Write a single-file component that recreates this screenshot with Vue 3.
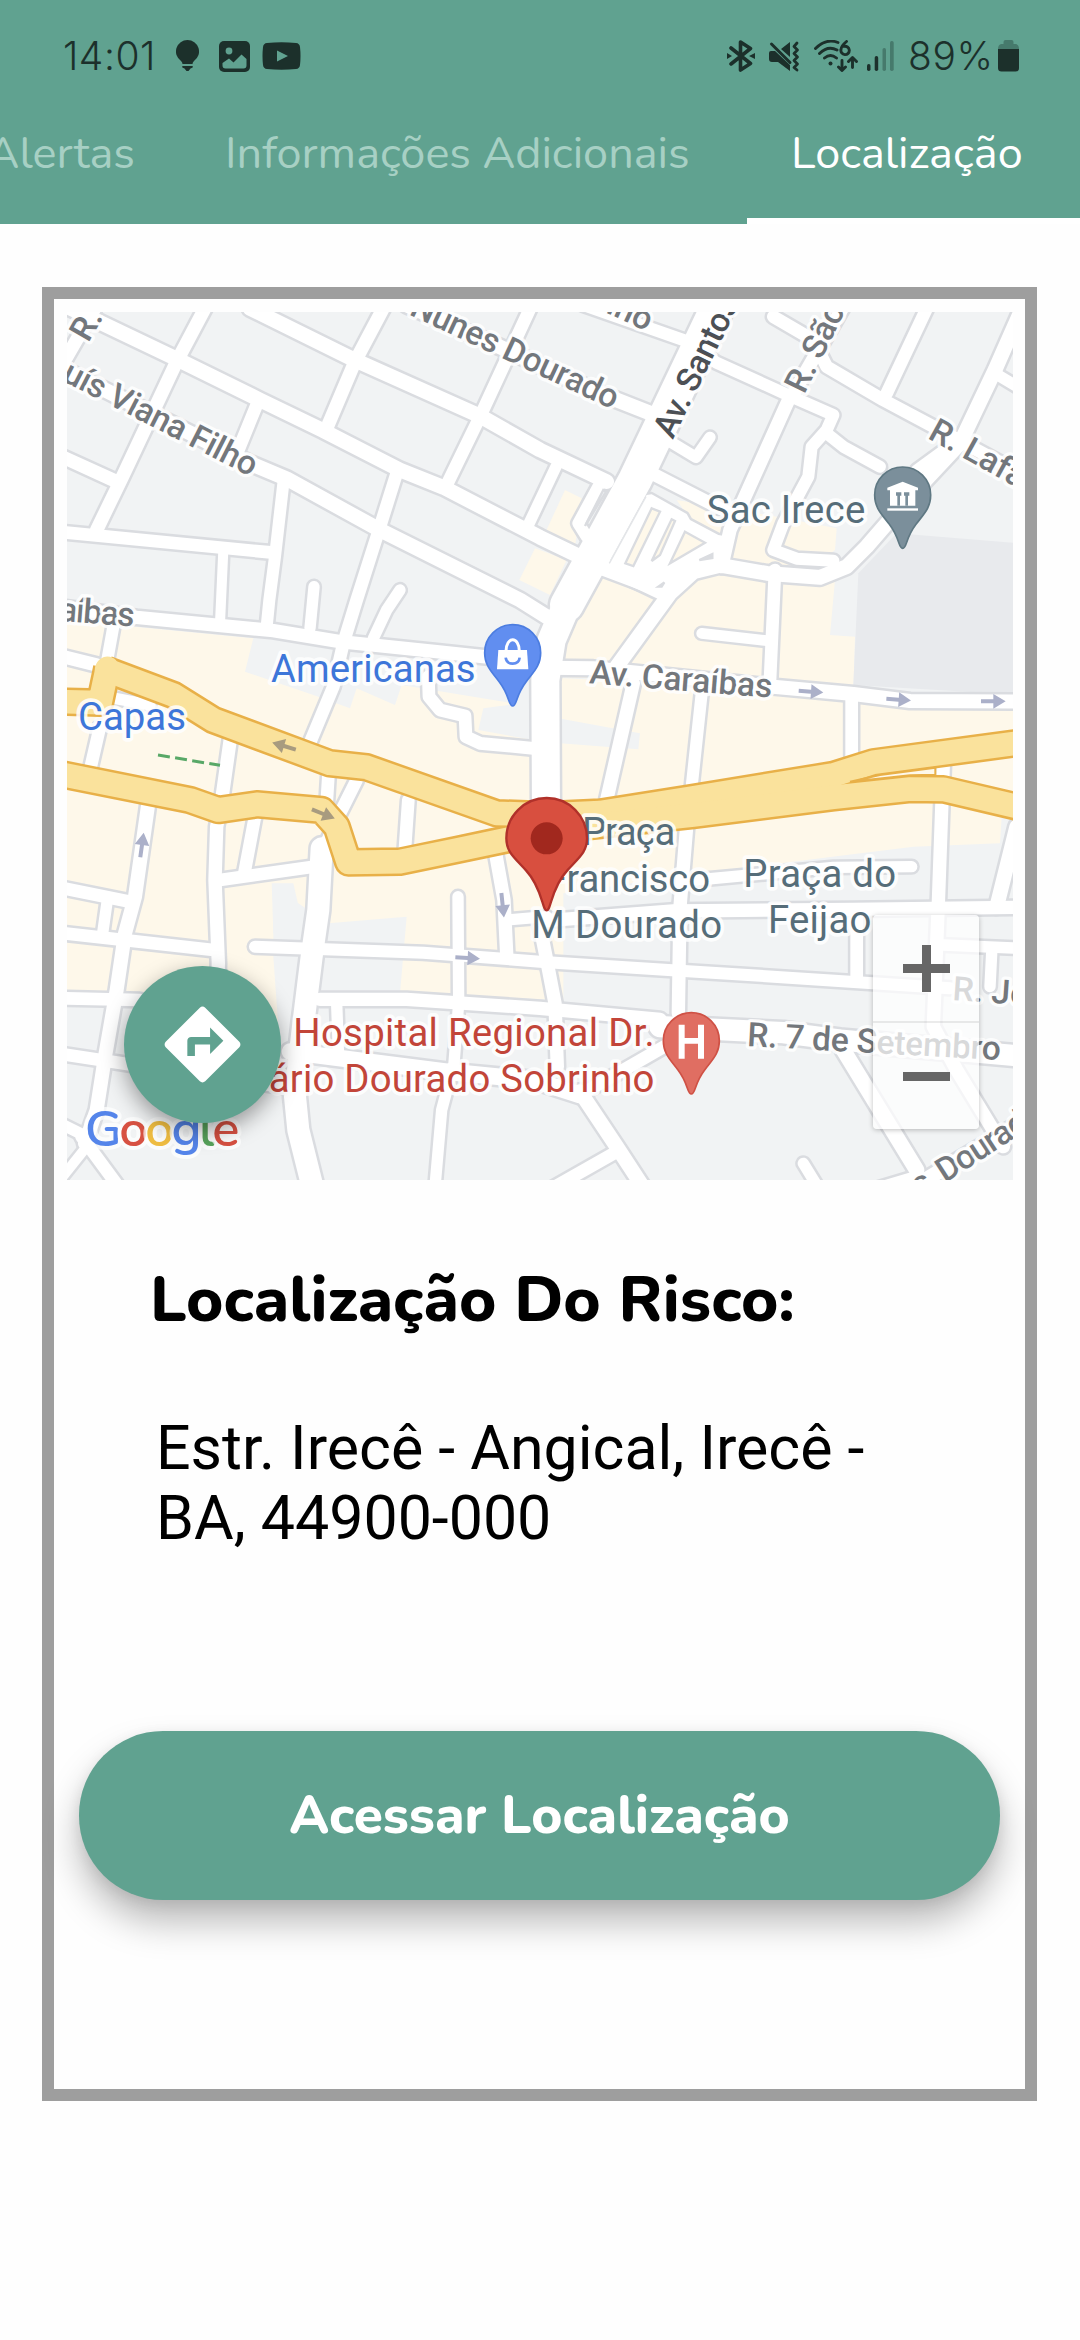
<script setup>
// Street geometry, in thirds of a CSS pixel: [points, inner width]
const streets = [
  ['190,915 300,967 520,1072 780,1200 970,1292 1200,1410 1330,1462 1620,1612 1740,1670', 44],
  ['750,925 1060,1078 1440,1248 1620,1350 1820,1445', 44],
  ['1220,915 1560,1068 1800,1180 1960,1243', 44],
  ['1750,915 2050,1020 2150,1088 2370,1188 2500,1245 2480,1290 2435,1340 2425,1430 2350,1570 2320,1650 2390,1676 2500,1682', 36],
  ['2480,1300 2530,1340 2640,1400', 36],
  ['195,1080 290,915', 40],
  ['620,915 530,1085 365,1435 290,1590', 40],
  ['770,1215 715,1350', 38],
  ['1155,915 1065,1085 980,1285', 40],
  ['1595,915 1440,1250 1340,1455', 38],
  ['1668,1400 1585,1575', 34],
  ['1190,1420 1140,1580 1070,1800 1030,1930 1000,2060 925,2240', 38],
  ['850,1450 825,1670 808,1800 800,1880', 36],
  ['150,1080 200,1112 750,1390 860,1436 1140,1590 1560,1800 1640,1850', 44],
  ['190,1372 350,1445', 40],
  ['190,1597 820,1658', 38],
  ['670,1650 660,1870', 30],
  ['942,1760 930,1885', 34],
  ['1200,1770 1160,1830 1120,1915', 34],
  ['190,1822 410,1852 820,1892 1020,1925 1310,1955 1640,1990', 40],
  ['1640,2003 1780,2005 2320,2060 2560,2082 2730,2103 3060,2105', 42],
  ['340,1880 320,1990', 36],
  ['190,1970 290,1995', 40],
  ['345,2095 450,2115', 34],
  ['300,2180 270,2310', 38],
  ['692,2210 665,2400 650,2480 645,2640 655,2890 652,2980', 40],
  ['765,2450 732,2625', 38],
  ['660,2640 940,2600', 38],
  ['445,2410 405,2690 375,2800 350,2970 315,3170 290,3330 255,3430', 42],
  ['985,2330 980,2410', 38],
  ['1070,2340 1015,2450 965,2560', 38],
  ['965,2545 955,2730 935,2870 910,3070 885,3290 895,3390 935,3550', 66],
  ['1225,2400 1215,2545', 38],
  ['1374,2690 1376,3010 1362,3190 1325,3330 1305,3560', 34],
  ['1485,2550 1512,2700 1520,2860', 40],
  ['1520,2760 1640,2750', 34],
  ['1285,2030 1287,2090 1320,2130 1395,2148 1398,2210 1440,2230 1600,2245', 38],
  ['190,2665 390,2705', 38],
  ['322,2700 308,2800', 34],
  ['190,2800 640,2850', 38],
  ['190,2995 420,3000', 38],
  ['190,3163 400,3195 880,3265', 38],
  ['765,2840 1270,2858 1620,2885 2040,2912 2550,2945 2850,2965', 36],
  ['960,2998 1220,2998 1620,3025 1980,3058', 40],
  ['1980,3080 2350,3098 2520,3120 3060,3168', 64],
  ['870,3155 1340,3215 1600,3240 1740,3285', 50],
  ['2010,3130 1740,3285', 38],
  ['1740,3275 1850,3440 1935,3570', 44],
  ['1850,3455 1630,3580', 38],
  ['190,3375 260,3410', 34],
  ['245,3410 370,3580', 38],
  ['260,3440 180,3540', 30],
  ['1010,3010 1015,3150', 34],
  ['2060,2480 2040,2720 2035,3040', 40],
  ['2105,2080 2075,2360', 36],
  ['1900,2050 1820,2400', 40],
  ['2325,1710 2310,2040', 38],
  ['2105,1900 2300,1922', 32],
  ['2555,2090 2555,2270', 38],
  ['2830,2290 2815,2710 2800,3080 2870,3210 3010,3440', 40],
  ['2530,3150 2750,3510', 46],
  ['2750,3530 2600,3575', 36],
  ['2570,2740 2570,2930', 38],
  ['2975,2860 2970,2960', 34],
  ['2830,2835 3060,2845', 34],
  ['3050,2480 2990,2720', 44],
  ['1640,2762 2020,2733 2560,2728 3060,2722', 40],
  ['2090,2640 2500,2602 2735,2600', 34],
  ['1620,2780 1640,2880 1665,3010 1672,3200', 40],
  ['2410,3490 2465,3580', 34],
  ['3060,3370 2750,3555', 44],
  ['2370,1190 2190,1590 2165,1700', 40],
  ['2380,1180 2530,920', 40],
  ['2320,950 2440,1020 2480,1100 2650,1200 2810,1285 3060,1420', 38],
  ['2785,915 2660,1180', 38],
  ['3060,940 2985,1110 2880,1330 2730,1490 2600,1640 2540,1700 2460,1732 2300,1720 2160,1696 2080,1716 2010,1780 1850,2000', 44],
  ['2860,1330 2750,1410', 34],
  ['2985,1120 3060,1165', 34],
  ['1965,1425 2180,1535', 38],
  ['2130,1312 2088,1372 2010,1325', 34],
  ['1795,1460 1735,1570 1760,1610', 36],
  ['1800,1690 2000,1785', 44],
  ['2155,915 1905,1440 1700,1815', 100],
  ['1700,1815 1655,1920 1636,2040 1638,2440', 84],
]

// Paved area east of Av. Santos and the traffic islands inside it
const plaza = '1940,1485 1955,1483 2060,1542 2070,1560 2155,1605 2185,1610 2185,1670 2140,1715 2050,1740 2000,1800 1800,1725 1825,1692'
const islands = [
  ['1955,1525 1980,1535 1900,1698 1876,1690', '#fef8ea'],
  ['2015,1558 2025,1563 1980,1665 1955,1683', '#fef8ea'],
  ['2055,1595 2115,1628 2010,1690', '#fef8ea'],
  ['1810,1470 1818,1475 1755,1578', '#f1f3f4'],
  ['2098,1680 2137,1662 2137,1674', '#dadce0'],
  ['1975,1760 1993,1747 1985,1760', '#dadce0'],
]

const highways = [
  '190,2105 300,2108 322,2005',
  '320,2010 520,2085 640,2160 990,2290 1100,2302 1490,2440 1640,2445 1800,2438 2070,2395 2500,2325 2620,2287 3060,2228',
  '180,2322 570,2400 655,2430 770,2413 965,2430 1010,2480 1045,2587 1200,2585 1370,2550 1560,2510 1640,2492 2080,2445 2500,2392 2730,2367 2830,2368 3060,2422',
]

const commercial = [
  '190,1860 760,1915 735,2015 940,2085 1050,2125 1070,2065 1185,2115 1205,2055 1600,2120 1600,2030 3060,2100 3060,2450 3005,2450 3000,2530 2740,2540 2540,2565 2100,2620 1690,2680 1690,3000 1200,2980 1220,2750 985,2770 820,2660 820,2870 835,3080 700,3000 190,2980',
  '1700,1940 1760,1770 1800,1700 2200,1720 2505,1740 2490,1905 2565,1910 2560,2070 1660,2030',
  '1695,1470 1745,1495 1725,1640 1635,1600',
  '1605,1645 1700,1680 1650,1785 1558,1740',
  '2030,1500 2330,1550 2510,1585 2505,1650 2440,1700 2180,1700 2100,1600',
]

const blocks = [
  '1675,2155 1920,2200 1915,2248 1680,2230',
  '1560,2110 1600,2110 1600,2220 1435,2190 1450,2125',
  '815,2650 880,2650 905,2760 820,2800',
]

const arrows = [
  { x: 852, y: 2238, r: 197, c: '#a89b7f' },
  { x: 970, y: 2442, r: 22, c: '#a89b7f' },
  { x: 426, y: 2535, r: -82, c: '#abb0c9' },
  { x: 1508, y: 2716, r: 84, c: '#abb0c9' },
  { x: 1403, y: 2874, r: 3, c: '#abb0c9' },
  { x: 2433, y: 2075, r: 4, c: '#abb0c9' },
  { x: 2696, y: 2099, r: 4, c: '#abb0c9' },
  { x: 2980, y: 2104, r: 0, c: '#abb0c9' },
]

const roadLabels = [
  { t: 'uís Viana Filho', x: 182, y: 1140, r: 27, w: 640 },
  { t: 'R.', x: 265, y: 1030, r: -60 },
  { t: 'Nunes Dourado', x: 1225, y: 943, r: 25, w: 676 },
  { t: 'inho', x: 1763, y: 912, r: 25 },
  { t: 'Av. Santos', x: 2018, y: 1320, r: -64, w: 458, dark: true },
  { t: 'R. São', x: 2413, y: 1185, r: -64, w: 285 },
  { t: 'R. Lafaiete', x: 2780, y: 1313, r: 29 },
  { t: 'aíbas', x: 176, y: 1862, r: 4.5, w: 226 },
  { t: 'Av. Caraíbas', x: 1766, y: 2050, r: 4.5, w: 550 },
  { t: 'R. 7 de Setembro', x: 2240, y: 3138, r: 3.2, w: 762 },
  { t: 'R. João', x: 2856, y: 3000, r: 4 },
  { t: 's', x: 2760, y: 3590, r: -33 },
  { t: 'Dourado', x: 2835, y: 3550, r: -33, w: 360 },
]

const placeLabels = [
  { t: 'Sac Irece', x: 2120, y: 1568, w: 476, k: 'slate' },
  { t: 'Americanas', x: 813, y: 2045, w: 614, k: 'blue' },
  { t: 'Capas', x: 234, y: 2190, w: 324, k: 'blue' },
  { t: 'Praça', x: 1746, y: 2535, w: 280, k: 'slate' },
  { t: 'Francisco', x: 1638, y: 2675, w: 492, k: 'slate' },
  { t: 'M Dourado', x: 1594, y: 2813, w: 572, k: 'slate' },
  { t: 'Praça do', x: 2230, y: 2662, w: 458, k: 'slate' },
  { t: 'Feijao', x: 2304, y: 2800, w: 310, k: 'slate' },
  { t: 'Hospital Regional Dr.', x: 880, y: 3137, w: 1084, k: 'red' },
  { t: 'ário Dourado Sobrinho', x: 806, y: 3275, w: 1157, k: 'red' },
]

const pin = 'M0 160C-13 160-8 130-40 88C-62 58-84 40-84 0A84 84 0 0 1 84 0C84 40 62 58 40 88C8 130 13 160 0 160Z'
</script>

<template>
  <div class="screen">
    <header class="appbar">
      <div class="status">
        <div class="status-left">
          <span class="clock">14:01</span>
          <svg class="bulb" width="23" height="32" viewBox="0 0 23 32"><path d="M11.500 0A11.500 11.500 0 0 0 5 21Q6.500 22.500 6.500 24H16.500Q16.500 22.500 18 21A11.500 11.500 0 0 0 11.500 0ZM6.300 26H16.700V27.500L14.500 28.500L12.500 31H10.500L8.500 28.500L6.300 27.500Z" /></svg>
          <svg class="photo" width="31" height="31" viewBox="0 0 31 31"><rect width="31" height="31" rx="5" /><circle cx="10" cy="10" r="3.400" fill="#60a290" /><path d="M3.500 22L10 17.500L14.500 21.500L22.500 13.500L27.500 18V24.500Q27.500 27.500 24.500 27.500H6.500Q3.500 27.500 3.500 24.500Z" fill="#60a290" /></svg>
          <svg class="video" width="39" height="28" viewBox="0 0 39 28"><path d="M5 1Q19.500-.5 34 1Q37.500 1.300 38 5Q39 14 38 23Q37.500 26.700 34 27Q19.500 28.500 5 27Q1.500 26.700 1 23Q0 14 1 5Q1.500 1.300 5 1Z" /><path d="M15 8.500V19.500L26 14Z" fill="#60a290" /></svg>
        </div>
        <div class="status-right">
          <svg width="28" height="32" viewBox="0 0 28 32"><path d="M4 8L23.500 23.500L13.500 30V2L23.500 8.500L4 24" fill="none" stroke="#1c302b" stroke-width="3.600" stroke-linejoin="round" stroke-linecap="round" /><path d="M0 13L5 16L0 19ZM28 13L22 16L28 19Z" /></svg>
          <svg class="mute" width="31" height="31" viewBox="0 0 31 31"><path d="M0 12Q0 10 2 10H6L21 24V30L9 21H3Q0 21 0 18ZM12 8L21 1V16Z" /><path d="M2.500 3L21 21.500" stroke="#1c302b" stroke-width="3" stroke-linecap="round" /><path d="M28 2L25 5.500L28.500 9L25 12.500L28.500 16L25 19.500L28.500 23L25 26.500L28 29" fill="none" stroke="#1c302b" stroke-width="2.800" stroke-linecap="round" stroke-linejoin="round" /></svg>
          <svg class="wifi" width="44" height="32" viewBox="0 0 44 32"><g fill="none" stroke="#1c302b" stroke-width="2.900" stroke-linecap="round" stroke-linejoin="round"><path d="M1.500 8.500Q12-2 24 2.500M5.500 13.500Q14 5 23 10M10.500 18Q16.500 13 22.500 18M32.500 1.500Q27 6 27 9.500A4.200 4.200 0 1 0 30 6.400M28 20.500V30M24.500 27L28 30.500L31.500 27M38.500 27.500V18.500M34.500 21.500L38.500 17.500L42.500 21.500" /></g><circle cx="16.500" cy="23.500" r="2" /></svg>
          <svg class="bars" width="27" height="31" viewBox="0 0 27 31"><rect y="23" width="3.500" height="7" rx="1.700" /><rect x="7.700" y="15" width="3.500" height="15" rx="1.700" /><g fill="#467a6c"><rect x="15.500" y="7" width="3.500" height="23" rx="1.700" /><rect x="23" y="0" width="3.700" height="30" rx="1.700" /></g></svg>
          <span class="percent">89%</span>
          <svg width="21" height="32" viewBox="0 0 21 32"><path d="M5.500 4V2Q5.500 0 7.500 0H13.500Q15.500 0 15.500 2V4H18Q21 5 21 9H0Q0 5 3 4Z" fill="#467a6c" /><path d="M0 9H21V28Q21 31.500 17.500 31.500H3.500Q0 31.500 0 28Z" /></svg>
        </div>
      </div>
      <nav class="tabs">
        <span class="tab first">Alertas</span>
        <span class="tab mid">Informações Adicionais</span>
        <span class="tab active">Localização</span>
      </nav>
    </header>

    <main class="card">
      <section class="map">
        <svg class="canvas" viewBox="201 936 2838 2604" preserveAspectRatio="none">
          <rect x="201" y="936" width="2838" height="2604" fill="#f1f3f4" />
          <polygon v-for="p in commercial" :key="p" :points="p" fill="#fef8ea" />
          <polygon v-for="p in blocks" :key="p" :points="p" fill="#f1f3f4" />
          <polygon points="2690,1600 3060,1630 3060,2085 2560,2055 2575,1720" fill="#e8eaed" />
          <g fill="none" stroke="#dadce0" stroke-linejoin="round" stroke-linecap="round">
            <polyline v-for="s in streets" :key="s[0]" :points="s[0]" :stroke-width="s[1] + 15" />
            <polygon :points="plaza" stroke-width="15" />
          </g>
          <g fill="none" stroke="#fff" stroke-linejoin="round" stroke-linecap="round">
            <polyline v-for="s in streets" :key="s[0]" :points="s[0]" :stroke-width="s[1]" />
          </g>
          <polygon :points="plaza" fill="#fff" />
          <path d="M1938 1490L1828 1690" stroke="#e3e5e8" stroke-width="4" />
          <polygon v-for="p in islands" :key="p[0]" :points="p[0]" :fill="p[1]" stroke="#dadce0" stroke-width="7" />
          <g fill="none" stroke-linejoin="round">
            <polyline v-for="h in highways" :key="h" :points="h" stroke="#e8b048" stroke-width="86" />
            <polyline v-for="h in highways" :key="h" :points="h" stroke="#fae29c" stroke-width="71" stroke-linecap="round" />
          </g>
          <path d="M2550 2345L2640 2325L2806 2303V2324L2730 2326Z" fill="#fef8ea" stroke="#e8b048" stroke-width="6" />
          <path d="M474 2265L660 2296" stroke="#58a867" stroke-width="9" stroke-dasharray="36 16" />
          <g v-for="(a, i) in arrows" :key="i" :transform="`translate(${a.x} ${a.y}) rotate(${a.r})`">
            <path d="M-37-6H0V-22L37 0L0 22V6H-37Z" :fill="a.c" />
          </g>
          <g class="road">
            <text v-for="l in roadLabels" :key="l.t" :class="{ dark: l.dark }" :transform="`translate(${l.x} ${l.y}) rotate(${l.r})`" :textLength="l.w">{{ l.t }}</text>
          </g>
          <g class="place">
            <text v-for="l in placeLabels" :key="l.t" :class="l.k" :x="l.x" :y="l.y" :textLength="l.w">{{ l.t }}</text>
          </g>
          <g transform="translate(2708 1485)">
            <path :d="pin" fill="#7b8f9b" stroke="#5f7883" stroke-width="5" />
            <path d="M-46-22V-14H46V-22L0-40ZM-38-14H38V32H-38Z" fill="#fff" />
            <path d="M-20-8H-4V2H-8V32H-16V2H-20ZM4-8H20V2H16V32H8V2H4Z" fill="#7b8f9b" />
            <path d="M-46 40H46V47H-46Z" fill="#fff" />
          </g>
          <g transform="translate(1538 1958)">
            <path :d="pin" fill="#618ef0" stroke="#4c7de0" stroke-width="5" />
            <path d="M-43-8H43L47 50H-47Z" fill="#fff" />
            <path d="M-20-4C-20-50 20-50 20-4" fill="none" stroke="#fff" stroke-width="9" />
            <path d="M-21 15Q-19 33 0 33Q19 33 21 15" fill="none" stroke="#618ef0" stroke-width="8" />
          </g>
          <g transform="translate(2074 3122)">
            <path :d="pin" fill="#e06e62" stroke="#cf5145" stroke-width="5" />
            <path d="M-38-48H-20V-8H20V-48H38V54H20V9H-20V54H-38Z" fill="#fff" />
          </g>
          <g transform="translate(1640 2515)">
            <path d="M0 216C-14 216-12 150-62 96C-100 55-121 40-121 0A121 121 0 0 1 121 0C121 40 100 55 62 96C12 150 14 216 0 216Z" fill="#d84f3f" stroke="#b0312a" stroke-width="7" />
            <circle r="48" fill="#a1281e" />
          </g>
          <text class="google" x="254" y="3438" textLength="464"><tspan fill="#5585ea">G</tspan><tspan fill="#d75142">o</tspan><tspan fill="#efbd42">o</tspan><tspan fill="#5585ea">g</tspan><tspan fill="#58a45c">l</tspan><tspan fill="#d75142">e</tspan></text>
        </svg>
        <button class="fab" type="button" aria-label="Rotas">
          <svg width="91" height="91" viewBox="0 0 24 24"><path fill="#fff" fill-rule="evenodd" d="M21.710 11.290l-9-9c-.39-.39-1.020-.39-1.410 0l-9 9c-.39.39-.39 1.020 0 1.410l9 9c.39.39 1.020.39 1.410 0l9-9c.39-.38.39-1.010 0-1.410zM14 14.500V12h-4v3H8v-4c0-.55.45-1 1-1h5V7.500l3.500 3.500-3.500 3.500z" /></svg>
        </button>
        <div class="zoom">
          <span class="zoom-btn plus"></span>
          <span class="zoom-btn"></span>
        </div>
      </section>

      <h1 class="title">Localização Do Risco:</h1>
      <p class="address">Estr. Irecê - Angical, Irecê -<br />BA, 44900-000</p>
      <button class="cta" type="button">Acessar Localização</button>
    </main>
  </div>
</template>

<style>
html, body { background: #fff; overflow: hidden; }
</style>

<style scoped>
.screen { width: 1080px; height: 2340px; overflow: hidden; background: #fefefe; font-family: Nunito, Lato, sans-serif; }
.appbar { height: 224px; background: #60a290; display: flex; flex-direction: column; }
.status { height: 112px; display: flex; justify-content: space-between; align-items: center; padding: 0 61px 0 63px; box-sizing: border-box; color: #1c302b; font: 300 39px/40px Inter, sans-serif; }
.status svg { fill: #1c302b; display: block; flex: none; }
.status-left, .status-right { display: flex; align-items: center; }
.clock { width: 92px; letter-spacing: .5px; margin-right: 21px; white-space: nowrap; }
.photo { margin-left: 20px; }
.video { margin-left: 12px; }
.mute { margin-left: 14px; }
.wifi { margin-left: 14px; }
.bars { margin-left: 9px; }
.percent { width: 90px; margin-left: 14px; letter-spacing: .6px; white-space: nowrap; }
.tabs { height: 112px; display: flex; color: #a7d0c4; font-size: 45px; line-height: 84px; white-space: nowrap; }
.tab { box-sizing: border-box; display: flex; flex: none; }
.first { width: 172px; justify-content: flex-end; padding-right: 37px; }
.mid { width: 575px; padding-left: 53px; }
.active { width: 333px; color: #fff; padding-left: 44px; border-bottom: 6px solid #fff; }
.card { box-sizing: border-box; width: 995px; height: 1814px; margin: 63px 0 0 42px; border: 12px solid #9e9e9e; padding: 13px 12px 0 13px; display: flex; flex-direction: column; }
.map { position: relative; width: 946px; height: 868px; overflow: hidden; flex: none; }
.canvas { width: 946px; height: 868px; display: block; }
.canvas text { paint-order: stroke; stroke: #fff; stroke-linejoin: round; font-family: Roboto, sans-serif; }
.road text { font-size: 101px; font-weight: 500; fill: #73777c; stroke-width: 20px; stroke-opacity: .85; }
.road .dark { fill: #4c5055; }
.place text { font-size: 115px; stroke-width: 22px; stroke-opacity: .85; }
.place .slate { fill: #566d79; }
.place .blue { fill: #3d76d9; }
.place .red { fill: #c24539; }
.canvas .google { font: 600 152px Nunito, Lato, sans-serif; stroke-width: 24px; stroke-opacity: .7; }
.fab { position: absolute; left: 57px; top: 654px; width: 157px; height: 157px; border: 0; border-radius: 50%; background: #60a290; box-shadow: 0 8px 22px rgba(0, 0, 0, .38); display: flex; align-items: center; justify-content: center; padding: 0; }
.zoom { position: absolute; left: 806px; top: 603px; width: 106px; height: 214px; background: rgba(255, 255, 255, .72); border-radius: 4px; box-shadow: 0 1px 5px rgba(0, 0, 0, .25); display: flex; flex-direction: column; }
.zoom-btn { flex: 1; background: linear-gradient(#666, #666) center / 47px 9px no-repeat; }
.plus { background: linear-gradient(#666, #666) center / 47px 9px no-repeat, linear-gradient(#666, #666) center / 9px 47px no-repeat; border-bottom: 2px solid rgba(0, 0, 0, .08); }
.title { margin: 82px 0 0 83px; font-size: 63.600px; font-weight: 800; line-height: 76px; color: #000; white-space: nowrap; }
.address { margin: 76px 0 0 89px; font: 400 60.900px/70px Roboto, sans-serif; color: #000; white-space: nowrap; }
.cta { margin: 177px 0 0 12px; width: 921px; height: 169px; border: 0; border-radius: 84px; background: #60a290; color: #fff; font: 800 53px/60px Nunito, Lato, sans-serif; box-shadow: 0 22px 36px rgba(0, 0, 0, .27), 0 4px 14px rgba(0, 0, 0, .08); flex: none; }
</style>
